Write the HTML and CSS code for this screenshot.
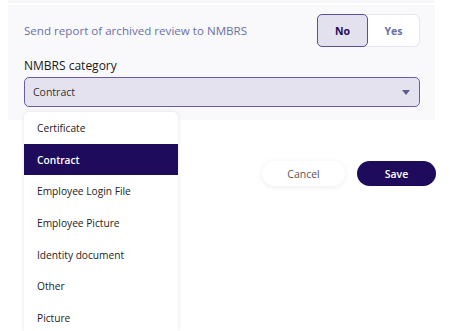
FILE: index.html
```html
<!DOCTYPE html>
<html lang="en">

<head>
    <meta charset="UTF-8">
    <meta name="viewport" content="width=device-width, initial-scale=1.0">
    <title>Archive review settings</title>
    <link rel="stylesheet" href="styles.css">
</head>

<body>
    <div class="top-strip"></div>
    <div class="panel">
        <div class="setting-row">
            <span class="setting-label">Send report of archived review to NMBRS</span>
            <div class="toggle">
                <button class="toggle-btn active">No</button>
                <button class="toggle-btn">Yes</button>
            </div>
        </div>
        <label class="field-label">NMBRS category</label>
        <div class="select">
            <span>Contract</span>
            <svg class="caret" width="8" height="5" viewBox="0 0 8 5"><path d="M0 0h8L4 5z" fill="#5b5a8e"/></svg>
        </div>
    </div>

    <ul class="dropdown">
        <li>Certificate</li>
        <li class="selected">Contract</li>
        <li>Employee Login File</li>
        <li>Employee Picture</li>
        <li>Identity document</li>
        <li>Other</li>
        <li>Picture</li>
    </ul>

    <div class="actions">
        <button class="btn-cancel">Cancel</button>
        <button class="btn-save">Save</button>
    </div>
</body>

</html>
```

FILE: styles.css
```css
* {
    margin: 0;
    padding: 0;
    box-sizing: border-box;
    font-family: "Open Sans", sans-serif;
}

body {
    background: #ffffff;
    color: #1a1a1a;
    width: 450px;
    height: 331px;
    overflow: hidden;
    position: relative;
}

.top-strip {
    margin-left: 8px;
    width: 427px;
    height: 3px;
    background: #f7f7f9;
}

.panel {
    margin-top: 2px;
    margin-left: 8px;
    width: 427px;
    padding: 9px 15px 13px 16px;
    background: #f9f9fb;
}

.setting-row {
    display: flex;
    align-items: center;
    justify-content: space-between;
}

.setting-label {
    font-size: 11.6px;
    color: #6b70a6;
}

.toggle {
    display: flex;
    height: 33px;
    border: 1px solid #e6e6ee;
    border-radius: 6px;
    background: #ffffff;
}

.toggle-btn {
    width: 51px;
    border: none;
    background: transparent;
    font-size: 10.5px;
    font-weight: 700;
    color: #6b70a6;
    border-radius: 5px;
}

.toggle-btn.active {
    margin: -1px 0 -1px -1px;
    background: #e4e1ee;
    border: 1.5px solid #5d4e9c;
    color: #1e0b5c;
}

.field-label {
    display: block;
    margin-top: 11px;
    font-size: 12px;
    line-height: 16px;
    color: #1a1a1a;
}

.select {
    margin-top: 3px;
    height: 30px;
    display: flex;
    align-items: center;
    justify-content: space-between;
    padding: 0 9px 0 8px;
    background: #e5e2ef;
    border: 1.5px solid #6a5aa8;
    border-radius: 5px;
    font-size: 10.5px;
    color: #333333;
}

.dropdown {
    position: absolute;
    top: 112px;
    left: 24px;
    width: 154px;
    list-style: none;
    background: #ffffff;
    border-radius: 5px;
    box-shadow: 0 0 4px rgba(0, 0, 0, 0.1);
}

.dropdown li {
    height: 31.7px;
    display: flex;
    align-items: center;
    padding-left: 13px;
    font-size: 10.2px;
    color: #222222;
}

.dropdown li.selected {
    background: #1e0b5c;
    color: #ffffff;
    font-weight: 600;
}

.actions {
    display: flex;
    justify-content: flex-end;
    gap: 12px;
    margin-top: 41px;
    padding-right: 14px;
}

.actions button {
    height: 25px;
    border: none;
    border-radius: 13px;
    font-size: 10.5px;
}

.btn-cancel {
    width: 83px;
    background: #ffffff;
    color: #555555;
    box-shadow: 0 1px 6px rgba(0, 0, 0, 0.08);
}

.btn-save {
    width: 79px;
    background: #1e0b5c;
    color: #ffffff;
    font-weight: 600;
}
```
